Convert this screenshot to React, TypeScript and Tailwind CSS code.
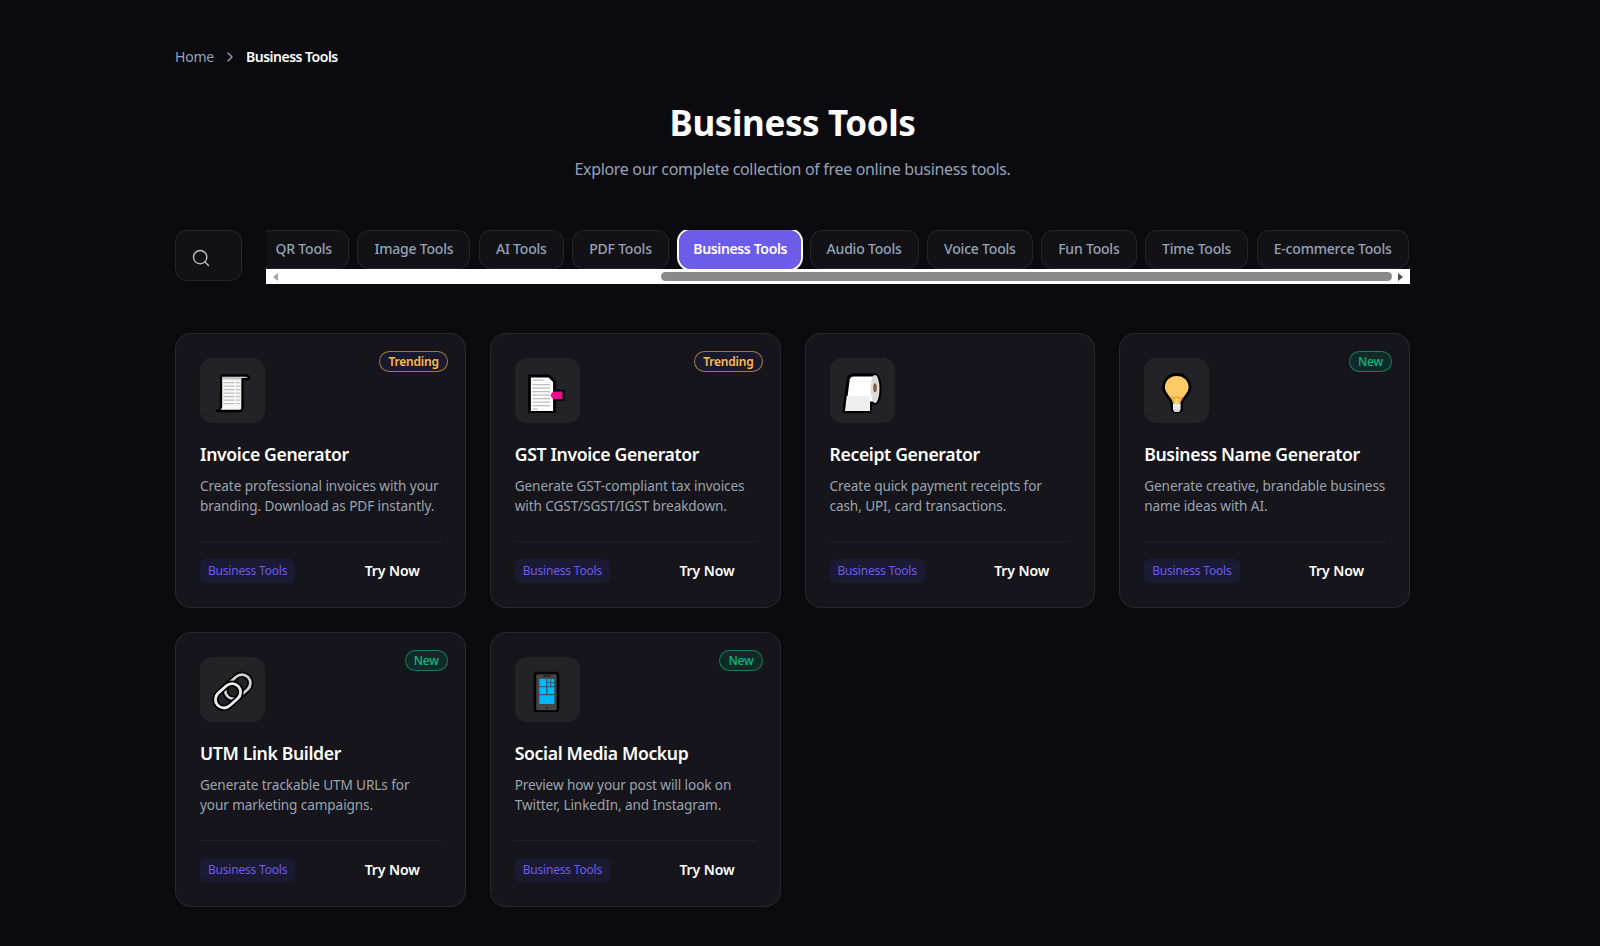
import { ChevronRight, Search } from "lucide-react";
import React from "react";

const InvoiceIcon = () => (
  <svg width="44" height="44" viewBox="0 0 44 44">
    <path d="M12 6.500H34.500q3.500 0 3.500 3.500h-6.500V39q0 3-3 3H6q3-1 4-4V9q0-2.500 2-2.500z" fill="#f6f6f6" stroke="#000" strokeWidth="2.400" strokeLinejoin="round" />
    <rect x="12" y="8" width="18" height="2.500" fill="#c4c4c4" />
    {[13, 16.500, 20, 23.500, 27, 30.500, 34].map((y) => (
      <g key={y}>
        <rect x="12.500" y={y} width="11" height="1.200" fill="#bdbdbd" />
        <rect x="25" y={y} width="4.500" height="1.200" fill="#bdbdbd" />
      </g>
    ))}
  </svg>
);

const DocIcon = () => (
  <svg width="44" height="44" viewBox="0 0 44 44">
    <path d="M30 22h8.500v8.500H30z" fill="#000" stroke="#000" strokeWidth="2.500" strokeLinejoin="round" />
    <path d="M4.500 7H24l5.500 5.500V43.500H4.500z" fill="#fbfbfb" stroke="#000" strokeWidth="2.800" strokeLinejoin="round" />
    <path d="M29 22.500h8.500v7.500H29q-2 0-3.500-3.700 1.500-3.800 3.500-3.800z" fill="#ec0b8f" />
    <rect x="7.500" y="10.500" width="11" height="1.200" fill="#bdbdbd" />
    {[15, 18.500, 22, 25.500, 29, 32.500, 36].map((y) => (
      <rect key={y} x="7.500" y={y} width="17.500" height="1.200" fill="#bdbdbd" />
    ))}
    <rect x="7.500" y="39.500" width="5" height="1.200" fill="#bdbdbd" />
  </svg>
);

const RollIcon = () => (
  <svg width="44" height="44" viewBox="0 0 44 44">
    <path d="M8 12q0-6 6-6H35c3 0 5 6 5 14s-2 14-5 14h-4.500V42.800H4z" fill="#fff" stroke="#000" strokeWidth="3" strokeLinejoin="round" />
    <path d="M6.700 27H30v15H5z" fill="#efefef" />
    <ellipse cx="35" cy="20" rx="4.500" ry="14" fill="#dcdcdc" />
    <ellipse cx="35" cy="18.700" rx="1.800" ry="4.500" fill="#8a5a32" />
  </svg>
);

const BulbIcon = () => (
  <svg width="44" height="44" viewBox="0 0 44 44">
    <path d="M21.700 5.500C14 5.500 8.500 11.500 8.500 18.500c0 5.500 4.500 8.500 6.500 12 1 1.800 1.500 3 2 4.500v5.500l2 2.500h5.500l2-2.500V35c.5-1.500 1-2.700 2-4.500 2-3.500 6.500-6.500 6.500-12 0-7-5.500-13-13.300-13z" fill="#ffcb66" stroke="#000" strokeWidth="2.800" strokeLinejoin="round" />
    <path d="M18 34.500h7.500v6.500l-1.500 2h-4.500l-1.500-2z" fill="#d8d8d8" />
    <path d="M18 36.500h7.500M18 39h7.500" stroke="#fff" strokeWidth="1" />
    <path d="M19 34l-2-6 2.500 1.500 2.200-2 2.200 2 2.500-1.500-2 6" fill="none" stroke="#f0a030" strokeWidth="1.200" />
  </svg>
);

const LinkIcon = () => (
  <svg width="44" height="44" viewBox="0 0 44 44">
    <g fill="none">
      <rect x="-14" y="-8.500" width="28" height="17" rx="8.500" transform="translate(26.800 18.800) rotate(-42)" stroke="#000" strokeWidth="6" />
      <rect x="-14" y="-8.500" width="28" height="17" rx="8.500" transform="translate(26.800 18.800) rotate(-42)" stroke="#cfcfcf" strokeWidth="2.800" />
      <rect x="-14" y="-8.500" width="28" height="17" rx="8.500" transform="translate(17 27.800) rotate(-42)" stroke="#000" strokeWidth="6" />
      <rect x="-14" y="-8.500" width="28" height="17" rx="8.500" transform="translate(17 27.800) rotate(-42)" stroke="#ececec" strokeWidth="2.800" />
    </g>
  </svg>
);

const PhoneIcon = () => (
  <svg width="44" height="44" viewBox="0 0 44 44">
    <rect x="10" y="5" width="23" height="38.500" rx="2.500" fill="#444" stroke="#000" strokeWidth="2.500" />
    <rect x="18" y="7.500" width="7" height="1" fill="#111" />
    <g fill="#00b7fb">
      <rect x="14.300" y="10.800" width="7" height="7.500" />
      <rect x="22.300" y="10.800" width="3" height="3.400" />
      <rect x="26.200" y="10.800" width="3" height="3.400" />
      <rect x="22.300" y="15" width="3" height="3.300" />
      <rect x="26.200" y="15" width="3" height="3.300" />
      <rect x="14.300" y="19.200" width="7" height="7" />
      <rect x="22.300" y="19.200" width="7" height="7" />
      <rect x="14.300" y="27.200" width="15" height="8.800" />
    </g>
    <circle cx="21.700" cy="39.700" r="1" fill="#222" />
  </svg>
);

type Tool = {
  title: string;
  desc: string[];
  badge?: "Trending" | "New";
  icon: React.ReactNode;
};

const tools: Tool[] = [
  { title: "Invoice Generator", desc: ["Create professional invoices with your", "branding. Download as PDF instantly."], badge: "Trending", icon: <InvoiceIcon /> },
  { title: "GST Invoice Generator", desc: ["Generate GST-compliant tax invoices", "with CGST/SGST/IGST breakdown."], badge: "Trending", icon: <DocIcon /> },
  { title: "Receipt Generator", desc: ["Create quick payment receipts for", "cash, UPI, card transactions."], icon: <RollIcon /> },
  { title: "Business Name Generator", desc: ["Generate creative, brandable business", "name ideas with AI."], badge: "New", icon: <BulbIcon /> },
  { title: "UTM Link Builder", desc: ["Generate trackable UTM URLs for", "your marketing campaigns."], badge: "New", icon: <LinkIcon /> },
  { title: "Social Media Mockup", desc: ["Preview how your post will look on", "Twitter, LinkedIn, and Instagram."], badge: "New", icon: <PhoneIcon /> },
];

const tabs = ["QR Tools", "Image Tools", "AI Tools", "PDF Tools", "Business Tools", "Audio Tools", "Voice Tools", "Fun Tools", "Time Tools", "E-commerce Tools"];

const ToolCard: React.FC<{ tool: Tool }> = ({ tool }) => (
  <div className="relative flex h-[275px] flex-col rounded-2xl border border-white/[0.08] bg-[#15151b] p-6">
    {tool.badge === "Trending" && (
      <span className="absolute right-[17px] top-[17px] rounded-full border border-[#fdba4d]/60 bg-[#1a1a2e] px-2 py-[1.500px] text-xs font-semibold tracking-[-0.2px] text-[#fdba4d]">
        Trending
      </span>
    )}
    {tool.badge === "New" && (
      <span className="absolute right-[17px] top-[17px] rounded-full border border-[#10b981]/60 bg-[#0f2a28] px-2 py-[1.500px] text-xs font-medium tracking-[-0.2px] text-[#10b981]">
        New
      </span>
    )}
    <div className="flex size-[65px] items-center justify-center rounded-xl bg-[#222227]">{tool.icon}</div>
    <h3 className="mt-[18px] whitespace-nowrap text-[17.600px] font-semibold leading-[26px] tracking-[-0.35px] text-white">{tool.title}</h3>
    <p className="mt-[9px] whitespace-nowrap text-[13.600px] leading-[20px] tracking-[-0.1px] text-[#9ca3af]">
      {tool.desc[0]}
      <br />
      {tool.desc[1]}
    </p>
    <div className="mt-auto flex items-center justify-between border-t border-white/5 pt-[17px]">
      <span className="rounded-md bg-[#1c1a33] px-2 py-[4px] text-[12px] leading-4 tracking-[-0.2px] text-[#6c5ce7]">Business Tools</span>
      <span className="-mt-[2px] pr-[21px] text-[14px] font-semibold tracking-[-0.1px] text-white">Try Now</span>
    </div>
  </div>
);

export default function App() {
  return (
    <div className="min-h-[946px] bg-[#0a0a0f] font-['Noto_Sans','Liberation_Sans',sans-serif]">
      <div className="w-[1585px]">
        <div className="mx-auto w-[1235px] pt-[46px] pb-[38px]">
          <nav className="flex items-center gap-2 text-[14px] leading-[22px]">
            <span className="tracking-[-0.2px] text-[#94a3b8]">Home</span>
            <ChevronRight size={16} className="text-[#94a3b8]" />
            <span className="font-semibold tracking-[-0.5px] text-white">Business Tools</span>
          </nav>
          <h1 className="mt-[31px] text-center text-[35px] font-bold leading-[48px] tracking-[-0.4px] text-white">Business Tools</h1>
          <p className="mt-[9px] text-center text-[16px] leading-[26px] tracking-[-0.33px] text-[#94a3b8]">
            Explore our complete collection of free online business tools.
          </p>
          <div className="mt-[48px] flex gap-6">
            <div className="flex h-[51px] w-[67px] shrink-0 items-center rounded-xl border border-white/[0.08] bg-[#111116] pl-[15px] pt-1">
              <Search size={20} strokeWidth={1.6} className="text-[#c4c4cc]" />
            </div>
            <div className="min-w-0 flex-1">
              <div className="h-[39px] overflow-hidden">
                <div className="-ml-[7.500px] flex gap-[8.500px]">
                  {tabs.map((tab) =>
                    tab === "Business Tools" ? (
                      <span key={tab} className="ml-[2px] h-[39px] whitespace-nowrap rounded-xl bg-[#6c5ce7] px-[14px] text-[14px] font-semibold leading-[38px] tracking-[-0.35px] text-white outline-2 outline-white">
                        {tab}
                      </span>
                    ) : (
                      <span key={tab} className="h-[39px] whitespace-nowrap rounded-xl border border-white/[0.08] bg-[#111116] px-4 text-[14px] font-medium leading-[36px] tracking-[-0.2px] text-[#94a3b8]">
                        {tab}
                      </span>
                    ),
                  )}
                </div>
              </div>
              <div className="flex h-[15px] items-center bg-white pl-[7px] pr-[7px]">
                <span className="h-0 w-0 border-y-[4px] border-r-[5px] border-y-transparent border-r-[#a3a3a3]" />
                <div className="ml-[383px] h-[9px] w-[731px] rounded-full bg-[#8a8a8a]" />
                <span className="ml-auto h-0 w-0 border-y-[4px] border-l-[5px] border-y-transparent border-l-[#505050]" />
              </div>
            </div>
          </div>
          <div className="mt-[49px] grid grid-cols-4 gap-6">
            {tools.map((tool) => (
              <ToolCard key={tool.title} tool={tool} />
            ))}
          </div>
        </div>
      </div>
    </div>
  );
}
